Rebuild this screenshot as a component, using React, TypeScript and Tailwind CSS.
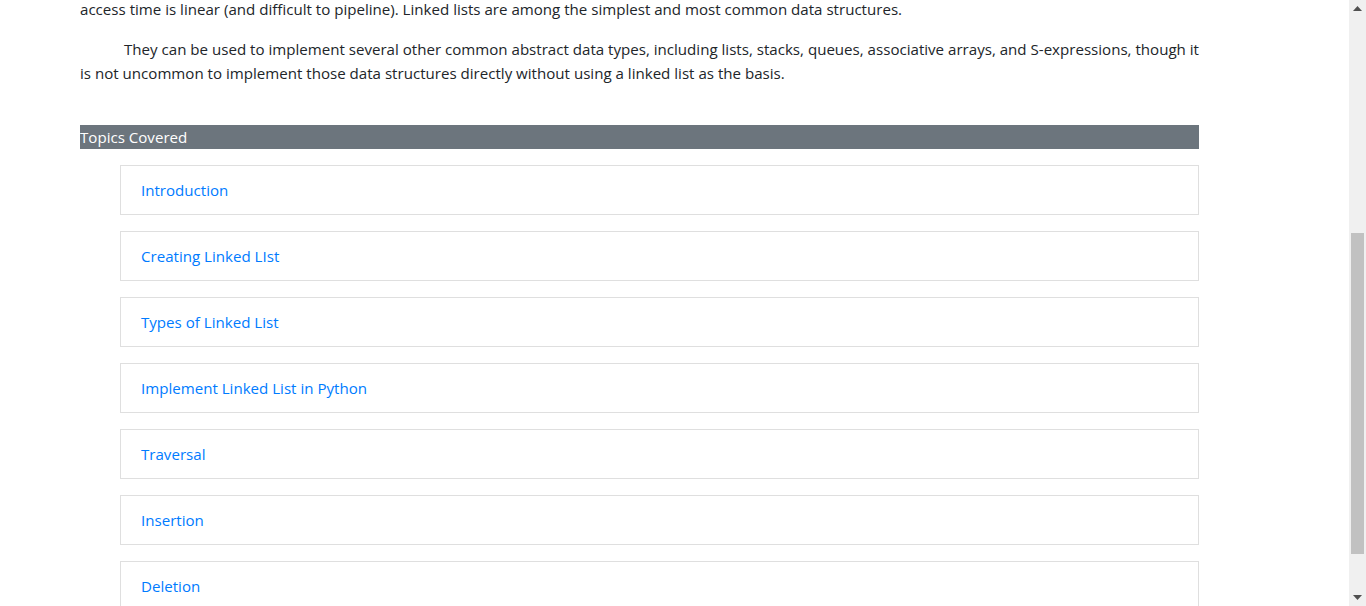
const topics = [
  "Introduction",
  "Creating Linked LIst",
  "Types of Linked List",
  "Implement Linked List in Python",
  "Traversal",
  "Insertion",
  "Deletion",
];

function Scrollbar() {
  return (
    <div className="flex h-full w-[17px] shrink-0 flex-col items-center bg-[#f0f0f0]">
      <div className="flex h-[17px] w-full items-center justify-center">
        <svg width="9" height="5" viewBox="0 0 9 5">
          <path d="M0 5 L4.5 0 L9 5 Z" fill="#505050" />
        </svg>
      </div>
      <div className="h-[216px]" />
      <div className="h-[321px] w-[13px] bg-[#c1c1c1]" />
      <div className="flex-1" />
      <div className="flex h-[17px] w-full items-center justify-center">
        <svg width="9" height="5" viewBox="0 0 9 5">
          <path d="M0 0 L4.5 5 L9 0 Z" fill="#505050" />
        </svg>
      </div>
    </div>
  );
}

export default function App() {
  return (
    <div className="flex h-[606px] w-[1366px] overflow-hidden bg-white font-['Open_Sans',sans-serif] text-[15.1px] leading-[24px] text-[#212529]">
      <div className="flex-1 overflow-hidden">
        <div className="ml-[80px] -mt-[3px] w-[1119px]">
          <p className="mb-[16px] whitespace-nowrap">
            access time is linear (and difficult to pipeline). Linked lists are among the simplest and most common data structures.
          </p>
          <p className="whitespace-nowrap indent-[44px]">
            They can be used to implement several other common abstract data types, including lists, stacks, queues, associative arrays, and S-expressions, though it
            <br />
            is not uncommon to implement those data structures directly without using a linked list as the basis.
          </p>

          <div className="mt-[40px] h-[24px] bg-[#6c757d] text-white">Topics Covered</div>

          <ul className="mt-[16px] flex flex-col gap-[16px] pl-[40px]">
            {topics.map((t) => (
              <li key={t} className="border border-[#dfdfdf] px-[20px] py-[12px]">
                <a href="#" className="text-[#007bff]">
                  {t}
                </a>
              </li>
            ))}
          </ul>
        </div>
      </div>
      <Scrollbar />
    </div>
  );
}
